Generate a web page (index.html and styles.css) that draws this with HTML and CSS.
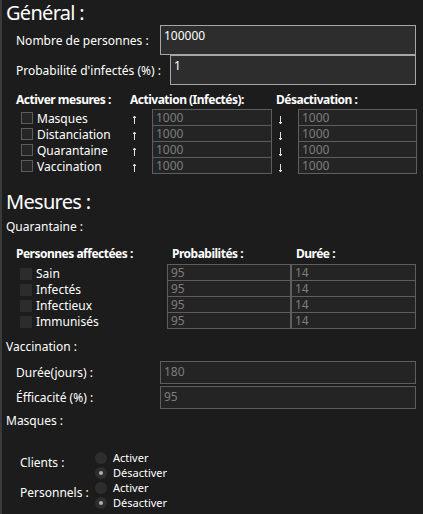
FILE: index.html
```html
<!DOCTYPE html>
<html lang="fr">
<head>
<meta charset="utf-8">
<link rel="stylesheet" href="styles.css">
</head>
<body>
<div class="page">
  <div class="title t-general">Général :</div>
  <div class="field">
    <span class="flabel">Nombre de personnes :</span>
    <div class="input bright w1">100000</div>
  </div>
  <div class="field">
    <span class="flabel">Probabilité d'infectés (%) :</span>
    <div class="input bright w2">1</div>
  </div>

  <div class="mgrid">
    <div class="hd">Activer mesures :</div>
    <div class="hd span2">Activation (Infectés):</div>
    <div class="hd span2 hd-des">Désactivation :</div>

    <div class="cbcell"><span class="cb"></span><span class="cbt">Masques</span></div>
    <div class="arrow"><svg width="5" height="10" viewBox="0 0 5 10"><path d="M2.5 1 V9 M1.2 3 L2.5 1 L3.8 3" stroke="#e0e0e0" stroke-width="1" fill="none"/></svg></div>
    <div class="input dim">1000</div>
    <div class="arrow dn"><svg width="5" height="10" viewBox="0 0 5 10"><path d="M2.5 1 V9 M1.2 7 L2.5 9 L3.8 7" stroke="#e0e0e0" stroke-width="1" fill="none"/></svg></div>
    <div class="input dim">1000</div>

    <div class="cbcell"><span class="cb"></span><span class="cbt">Distanciation</span></div>
    <div class="arrow"><svg width="5" height="10" viewBox="0 0 5 10"><path d="M2.5 1 V9 M1.2 3 L2.5 1 L3.8 3" stroke="#e0e0e0" stroke-width="1" fill="none"/></svg></div>
    <div class="input dim">1000</div>
    <div class="arrow dn"><svg width="5" height="10" viewBox="0 0 5 10"><path d="M2.5 1 V9 M1.2 7 L2.5 9 L3.8 7" stroke="#e0e0e0" stroke-width="1" fill="none"/></svg></div>
    <div class="input dim">1000</div>

    <div class="cbcell"><span class="cb"></span><span class="cbt">Quarantaine</span></div>
    <div class="arrow"><svg width="5" height="10" viewBox="0 0 5 10"><path d="M2.5 1 V9 M1.2 3 L2.5 1 L3.8 3" stroke="#e0e0e0" stroke-width="1" fill="none"/></svg></div>
    <div class="input dim">1000</div>
    <div class="arrow dn"><svg width="5" height="10" viewBox="0 0 5 10"><path d="M2.5 1 V9 M1.2 7 L2.5 9 L3.8 7" stroke="#e0e0e0" stroke-width="1" fill="none"/></svg></div>
    <div class="input dim">1000</div>

    <div class="cbcell"><span class="cb"></span><span class="cbt">Vaccination</span></div>
    <div class="arrow"><svg width="5" height="10" viewBox="0 0 5 10"><path d="M2.5 1 V9 M1.2 3 L2.5 1 L3.8 3" stroke="#e0e0e0" stroke-width="1" fill="none"/></svg></div>
    <div class="input dim">1000</div>
    <div class="arrow dn"><svg width="5" height="10" viewBox="0 0 5 10"><path d="M2.5 1 V9 M1.2 7 L2.5 9 L3.8 7" stroke="#e0e0e0" stroke-width="1" fill="none"/></svg></div>
    <div class="input dim">1000</div>
  </div>

  <div class="title t-mesures">Mesures :</div>
  <div class="sub t-quar">Quarantaine :</div>

  <div class="qgrid">
    <div class="hd">Personnes affectées :</div>
    <div class="hd hd-prob">Probabilités :</div>
    <div class="hd hd-dur">Durée :</div>

    <div class="cbcell"><span class="cb off"></span><span class="cbt">Sain</span></div>
    <div class="input dim">95</div>
    <div class="input dim">14</div>

    <div class="cbcell"><span class="cb off"></span><span class="cbt">Infectés</span></div>
    <div class="input dim">95</div>
    <div class="input dim">14</div>

    <div class="cbcell"><span class="cb off"></span><span class="cbt">Infectieux</span></div>
    <div class="input dim">95</div>
    <div class="input dim">14</div>

    <div class="cbcell"><span class="cb off"></span><span class="cbt">Immunisés</span></div>
    <div class="input dim">95</div>
    <div class="input dim">14</div>
  </div>

  <div class="sub t-vacc">Vaccination :</div>
  <div class="vfield">
    <span class="vlabel">Durée(jours) :</span>
    <div class="input dim vin">180</div>
  </div>
  <div class="vfield vf2">
    <span class="vlabel">Éfficacité (%) :</span>
    <div class="input dim vin">95</div>
  </div>

  <div class="sub t-masq">Masques :</div>

  <div class="rgroup g1">
    <span class="rlabel">Clients :</span>
    <div class="radios">
      <div class="ropt"><span class="radio"></span><span>Activer</span></div>
      <div class="ropt"><span class="radio on"></span><span>Désactiver</span></div>
    </div>
  </div>
  <div class="rgroup">
    <span class="rlabel">Personnels :</span>
    <div class="radios">
      <div class="ropt"><span class="radio"></span><span>Activer</span></div>
      <div class="ropt"><span class="radio on"></span><span>Désactiver</span></div>
    </div>
  </div>
</div>
</body>
</html>
```

FILE: styles.css
```css
html, body {
  margin: 0;
  padding: 0;
  background: #1c1c1c;
}
body {
  width: 423px;
  height: 514px;
  overflow: hidden;
  font-family: "Noto Sans", "Open Sans", sans-serif;
  font-size: 12px;
  color: #ffffff;
}
.page {
  height: 514px;
  border-left: 2px solid #3a3a3a;
  box-sizing: border-box;
  padding-left: 4px;
  padding-right: 7px;
}
.title {
  font-size: 20px;
  line-height: 25px;
  height: 25px;
  letter-spacing: -0.7px;
}
.field {
  display: flex;
  align-items: center;
  height: 30px;
  padding-left: 10px;
}
.flabel {
  white-space: nowrap;
}
.input {
  box-sizing: border-box;
  font-size: 12px;
  line-height: 14px;
  padding: 1px 0 0 3px;
  white-space: nowrap;
}
.bright {
  background: #2d2d2d;
  border: 1px solid #a6a6a6;
  color: #ffffff;
  height: 30px;
  padding-top: 3px;
}
.w1 { margin-left: auto; width: 256px; }
.w2 { margin-left: auto; width: 246px; }
.dim {
  background: #242424;
  border: 1px solid #5e5e5e;
  color: #7e7e7e;
  height: 17px;
}

.mgrid {
  margin-top: 7px;
  padding-left: 10px;
  display: grid;
  grid-template-columns: 114px 22px 119px 27px 118px;
  grid-template-rows: 17px repeat(4, 16px);
}
.hd {
  font-weight: bold;
  line-height: 16px;
  letter-spacing: -0.5px;
  white-space: nowrap;
}
.span2 { grid-column: span 2; }
.hd-des { padding-left: 5px; }
.cbcell {
  display: flex;
  align-items: flex-start;
  gap: 4px;
  padding-left: 5px;
  line-height: 16px;
  margin-top: 1px;
  white-space: nowrap;
}
.cbt { padding-top: 1px; }
.cb {
  box-sizing: border-box;
  width: 12px;
  height: 12px;
  margin-top: 2px;
  border: 1px solid #5c5c5c;
  background: #262626;
  flex: none;
}
.cb.off {
  border: none;
  background: #2c2c2c;
}
.arrow {
  padding-left: 2px;
  padding-top: 6px;
  line-height: 0;
}
.arrow.dn { padding-left: 7px; }
.mgrid .input { margin-right: -1px; }

.t-mesures { margin-top: 16px; }
.sub {
  line-height: 16px;
  height: 16px;
}
.t-quar { margin-top: 5px; }

.qgrid {
  margin-top: 11px;
  padding-left: 10px;
  display: grid;
  grid-template-columns: 151px 124px 125px;
  grid-template-rows: 18px repeat(4, 16px);
}
.qgrid .cbcell { margin-top: 2px; padding-left: 4px; }
.qgrid .cbt { padding-top: 0; }
.hd-prob { padding-left: 5px; }
.hd-dur { padding-left: 5px; }

.t-vacc { margin-top: 11px; }
.vfield {
  display: flex;
  align-items: center;
  height: 23px;
  margin-top: 6px;
  padding-left: 10px;
}
.vf2 { margin-top: 2px; }
.vlabel { white-space: nowrap; }
.vin {
  margin-left: auto;
  width: 256px;
  height: 23px;
  padding-top: 3px;
}
.t-masq { margin-top: 4px; }

.rgroup {
  display: flex;
  align-items: center;
  padding-left: 14px;
  height: 30px;
}
.g1 { margin-top: 21px; }
.rlabel {
  width: 75px;
  flex: none;
  line-height: 16px;
  margin-top: -5px;
  white-space: nowrap;
}
.radios {
  display: flex;
  flex-direction: column;
}
.ropt {
  display: flex;
  align-items: flex-start;
  gap: 6px;
  height: 15px;
  line-height: 15px;
  font-size: 11px;
}
.radio {
  width: 12px;
  height: 12px;
  border-radius: 50%;
  background: #2e2e2e;
  margin-top: 2px;
  flex: none;
  display: flex;
  align-items: center;
  justify-content: center;
}
.radio.on::after {
  content: "";
  width: 4px;
  height: 4px;
  border-radius: 50%;
  background: #b0b0b0;
}
```
